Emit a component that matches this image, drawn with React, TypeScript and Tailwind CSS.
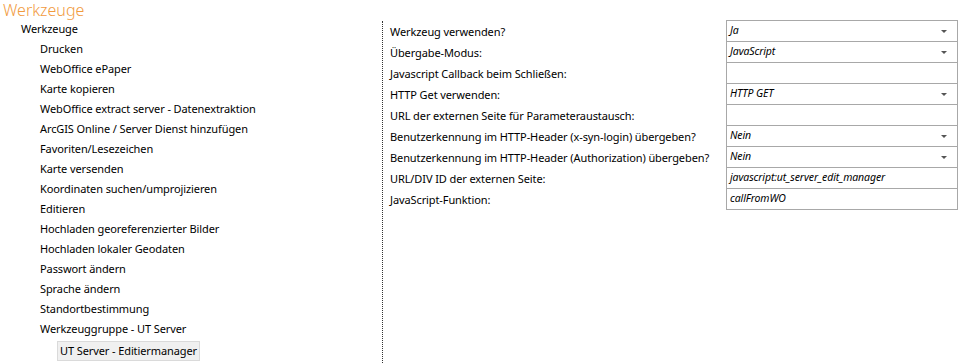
import React from "react";

const tools = [
  "Drucken",
  "WebOffice ePaper",
  "Karte kopieren",
  "WebOffice extract server - Datenextraktion",
  "ArcGIS Online / Server Dienst hinzufügen",
  "Favoriten/Lesezeichen",
  "Karte versenden",
  "Koordinaten suchen/umprojizieren",
  "Editieren",
  "Hochladen georeferenzierter Bilder",
  "Hochladen lokaler Geodaten",
  "Passwort ändern",
  "Sprache ändern",
  "Standortbestimmung",
  "Werkzeuggruppe - UT Server",
];

const props = [
  { label: "Werkzeug verwenden?", value: "Ja", select: true },
  { label: "Übergabe-Modus:", value: "JavaScript", select: true },
  { label: "Javascript Callback beim Schließen:", value: "" },
  { label: "HTTP Get verwenden:", value: "HTTP GET", select: true },
  { label: "URL der externen Seite für Parameteraustausch:", value: "" },
  { label: "Benutzerkennung im HTTP-Header (x-syn-login) übergeben?", value: "Nein", select: true },
  { label: "Benutzerkennung im HTTP-Header (Authorization) übergeben?", value: "Nein", select: true },
  { label: "URL/DIV ID der externen Seite:", value: "javascript:ut_server_edit_manager" },
  { label: "JavaScript-Funktion:", value: "callFromWO" },
];

export default function App() {
  return (
    <div className="w-[965px] h-[364px] overflow-hidden bg-white text-[11px] tracking-[-0.1px] text-black font-['Noto_Sans',sans-serif]">
      <div className="pl-[3px] h-[19px] text-[16px] leading-[21px] tracking-normal text-[#f19a3e] font-light">Werkzeuge</div>
      <div className="flex">
        <div className="w-[382px] shrink-0">
          <div className="h-[20px] leading-[20px] pl-[21px]">Werkzeuge</div>
          {tools.map((t) => (
            <div key={t} className="h-[20px] leading-[20px] pl-[40px]">{t}</div>
          ))}
          <div className="pl-[57px] pt-[2px]">
            <span className="inline-block h-[20px] leading-[18px] px-[2px] bg-[#f0f0f0] border border-[#dadada]">
              UT Server - Editiermanager
            </span>
          </div>
        </div>
        <div className="flex-1 border-l border-dotted border-[#333] mt-[2px] pl-[7px] pr-[7px] h-[344px]">
          <div className="flex">
            <div className="w-[336px] shrink-0">
              {props.map((p) => (
                <div key={p.label} className="h-[21px] leading-[21px] whitespace-nowrap">{p.label}</div>
              ))}
            </div>
            <div className="flex-1 border-t border-l border-r border-[#a8a8a8] italic text-[10.5px] -mt-[1px]">
              {props.map((p) => (
                <div key={p.label} className="h-[21px] border-b border-[#a8a8a8] flex items-center justify-between pl-[3px] pr-[10px]">
                  <span>{p.value}</span>
                  {p.select && (
                    <span className="w-0 h-0 border-l-[3px] border-r-[3px] border-t-[3px] border-l-transparent border-r-transparent border-t-[#555]" />
                  )}
                </div>
              ))}
            </div>
          </div>
        </div>
      </div>
    </div>
  );
}
